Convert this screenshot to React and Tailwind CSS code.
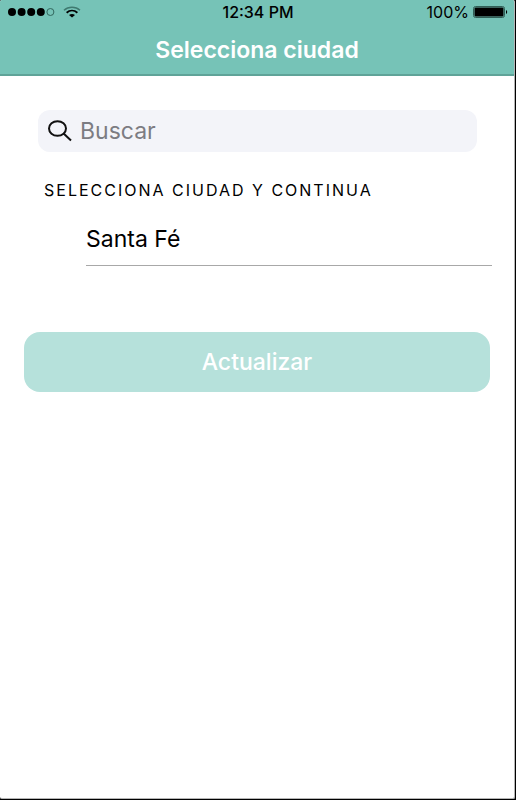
import React, { useState } from 'react';

const CITIES = ['Santa Fé'];

const StatusBar = () => (
    <div className="grid grid-cols-3 items-center h-6 pl-2 pr-1.5 text-black text-base leading-6">
        <div className="flex items-center gap-2">
            {/* Cobertura */}
            <svg width="47" height="8" viewBox="0 0 47 8" aria-hidden="true">
                <circle cx="4" cy="4" r="4" />
                <circle cx="13.6" cy="4" r="4" />
                <circle cx="23.2" cy="4" r="4" />
                <circle cx="32.8" cy="4" r="4" />
                <circle cx="42.4" cy="4" r="3.5" fill="none" stroke="#33665d" strokeWidth="1" />
            </svg>
            {/* Wifi */}
            <svg width="18" height="12" viewBox="0 0 18 12" fill="none" aria-hidden="true">
                <path d="M1 4.2C5.4 0.3 12.6 0.3 17 4.2" stroke="#3f7a70" strokeWidth="1.5" />
                <path d="M3.6 6.7C6.8 4 11.2 4 14.4 6.7" stroke="#000" strokeWidth="1.8" />
                <path d="M6 9C7.8 7.5 10.2 7.5 12 9L9 11.6Z" fill="#000" />
            </svg>
        </div>
        <span className="text-center font-medium whitespace-nowrap">12:34 PM</span>
        <div className="flex items-center justify-end gap-1">
            <span>100%</span>
            <svg width="35" height="12" viewBox="0 0 35 12" aria-hidden="true">
                <rect x="0.5" y="0.5" width="31" height="11" rx="2" fill="none" stroke="#315f57" />
                <rect x="1.5" y="1.5" width="29" height="9" rx="1" />
                <path d="M33 4C34.6 4.6 34.6 7.4 33 8Z" />
            </svg>
        </div>
    </div>
);

const SelectCity = () => {
    const [searchTerm, setSearchTerm] = useState('');
    const [selected, setSelected] = useState('');

    // Filtro de búsqueda
    const filteredCities = CITIES.filter(city =>
        city.toLowerCase().includes(searchTerm.toLowerCase())
    );

    return (
        <div className="min-h-screen flex bg-black pr-px pb-px font-['Inter','Liberation_Sans',sans-serif]">
            <div className="flex-1 rounded-xs overflow-hidden bg-white border-r border-b border-r-[#b5b5b5] border-b-[#b5b5b5] text-black">
                {/* Cabecera */}
                <header className="h-[76px] bg-[#76c3b7] border-b-2 border-[#5fa398]">
                    <StatusBar />
                    <h1 className="pt-3 text-center text-[23px] leading-7 font-semibold text-white">
                        Selecciona ciudad
                    </h1>
                </header>

                <main className="pl-6 pr-6">
                    {/* Buscador */}
                    <label className="flex items-center gap-2 h-[42px] mt-[34px] ml-[14px] mr-[13px] px-2.5 rounded-xl bg-[#f3f4f9]">
                        <svg width="24" height="22" viewBox="0 0 24 22" fill="none" stroke="#111" strokeWidth="2" aria-hidden="true">
                            <ellipse cx="9.5" cy="8.5" rx="8.5" ry="7.3" />
                            <path d="M15.6 13.6L23 20.5" />
                        </svg>
                        <input
                            type="text"
                            aria-label="Buscar"
                            placeholder="Buscar"
                            className="flex-1 min-w-0 bg-transparent text-[23px] leading-7 outline-none placeholder:text-[#7c7c82]"
                            value={searchTerm}
                            onChange={(e) => setSearchTerm(e.target.value)}
                        />
                    </label>

                    <h2 className="mt-7 pl-5 text-base leading-5 tracking-[2px] uppercase">
                        Selecciona ciudad y continua
                    </h2>

                    {/* Lista de ciudades */}
                    <ul className="mt-4 ml-[62px] -mr-0.5">
                        {filteredCities.map(city => (
                            <li key={city} className="border-b border-[#a8a8a8]">
                                <button
                                    type="button"
                                    aria-pressed={selected === city}
                                    onClick={() => setSelected(city)}
                                    className="block w-full h-[49px] pb-1 text-left text-[23px] leading-7"
                                >
                                    {city}
                                </button>
                            </li>
                        ))}
                    </ul>

                    <button
                        type="button"
                        className="block w-full h-[60px] mt-[66px] rounded-2xl bg-[#b6e1db] text-white text-[23px] leading-7 font-medium"
                    >
                        Actualizar
                    </button>
                </main>
            </div>
        </div>
    );
};

export default SelectCity;
